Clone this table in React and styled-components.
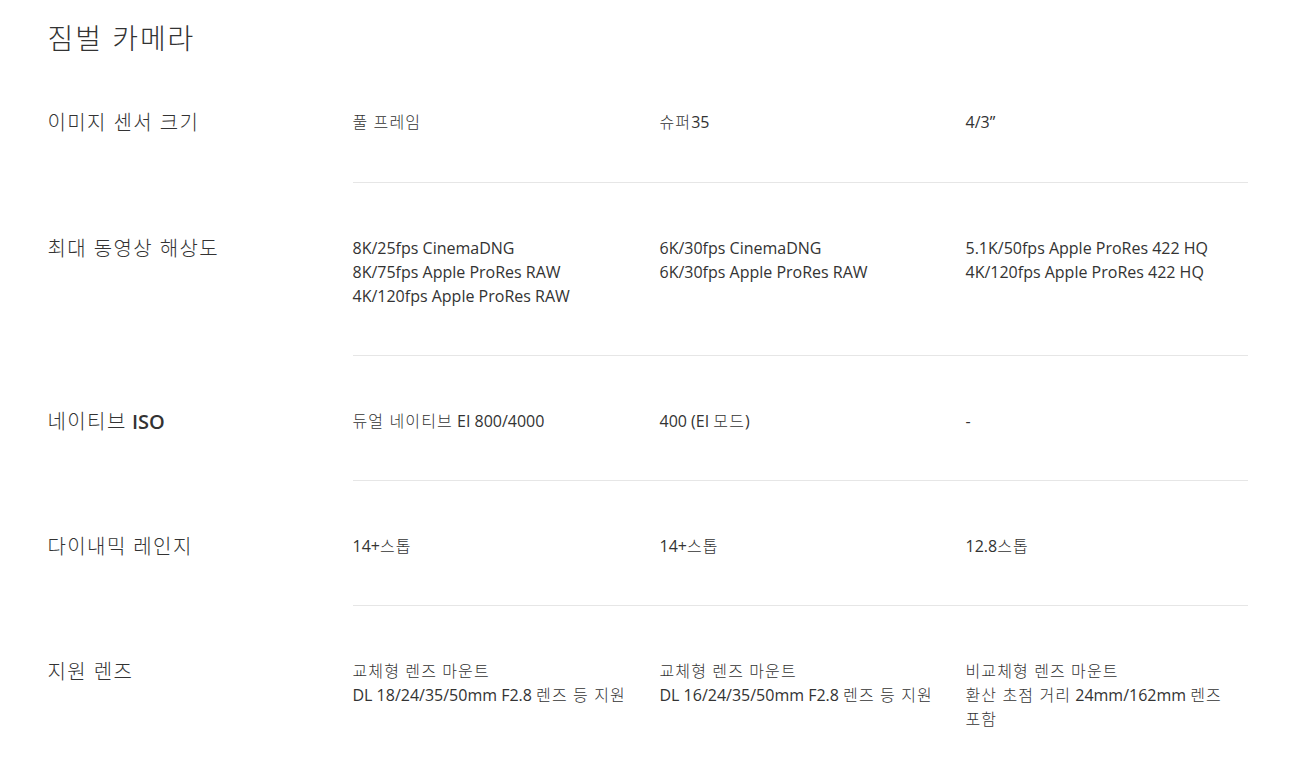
import styled, { createGlobalStyle } from 'styled-components';

const GlobalStyle = createGlobalStyle`
  body {
    margin: 0;
    background: #fff;
    font-family: "Open Sans", "Noto Sans CJK KR", sans-serif;
    color: #333;
  }
`;

const Ko = styled.span`
  font-weight: 300;
  letter-spacing: 0.07em;
`;

// wrap Hangul runs so they get the wider, lighter Korean setting
const ko = (text) =>
  text.split(/([가-힣][가-힣 ]*[가-힣]|[가-힣])/).map((part, i) =>
    /[가-힣]/.test(part) ? <Ko key={i}>{part}</Ko> : part
  );

const specs = [
  { label: '이미지 센서 크기', values: [['풀 프레임'], ['슈퍼35'], ['4/3”']] },
  {
    label: '최대 동영상 해상도',
    values: [
      ['8K/25fps CinemaDNG', '8K/75fps Apple ProRes RAW', '4K/120fps Apple ProRes RAW'],
      ['6K/30fps CinemaDNG', '6K/30fps Apple ProRes RAW'],
      ['5.1K/50fps Apple ProRes 422 HQ', '4K/120fps Apple ProRes 422 HQ'],
    ],
  },
  {
    label: '네이티브 ',
    bold: 'ISO',
    values: [['듀얼 네이티브 EI 800/4000'], ['400 (EI 모드)'], ['-']],
  },
  { label: '다이내믹 레인지', values: [['14+스톱'], ['14+스톱'], ['12.8스톱']] },
  {
    label: '지원 렌즈',
    values: [
      ['교체형 렌즈 마운트', 'DL 18/24/35/50mm F2.8 렌즈 등 지원'],
      ['교체형 렌즈 마운트', 'DL 16/24/35/50mm F2.8 렌즈 등 지원'],
      ['비교체형 렌즈 마운트', '환산 초점 거리 24mm/162mm 렌즈', '포함'],
    ],
  },
];

const App = () => (
  <Page>
    <GlobalStyle />
    <Title>{ko('짐벌 카메라')}</Title>
    {specs.map((row, i) => (
      <Row key={i}>
        <Label>
          {ko(row.label)}
          {row.bold && <b>{row.bold}</b>}
        </Label>
        <Values $last={i === specs.length - 1}>
          {row.values.map((lines, j) => (
            <Cell key={j}>
              {lines.map((l, k) => (
                <div key={k}>{ko(l)}</div>
              ))}
            </Cell>
          ))}
        </Values>
      </Row>
    ))}
  </Page>
);

export default App;

const Page = styled.div`
  width: 1200px;
  margin: 0 auto;
  padding-left: 2px;
`;

const Title = styled.h2`
  margin: 0;
  padding-top: 19px;
  font-size: 28px;
  line-height: 38px;
  font-weight: 400;
  color: #333;
`;

const Row = styled.div`
  display: flex;
  align-items: stretch;
`;

const Label = styled.div`
  width: 305px;
  flex-shrink: 0;
  padding-top: 51px;
  font-size: 20px;
  line-height: 30px;
  color: #333;
  white-space: pre;

  b {
    font-weight: 600;
  }
`;

const Values = styled.div`
  display: grid;
  grid-template-columns: 307px 306px 282px;
  padding: 53px 0 47px;
  border-bottom: ${(p) => (p.$last ? 'none' : '1px solid #e6e6e6')};

  &:first-child,
  ${Row}:first-of-type & {
    padding-bottom: 48px;
  }
`;

const Cell = styled.div`
  font-size: 16px;
  line-height: 24px;
  color: #333;
`;
